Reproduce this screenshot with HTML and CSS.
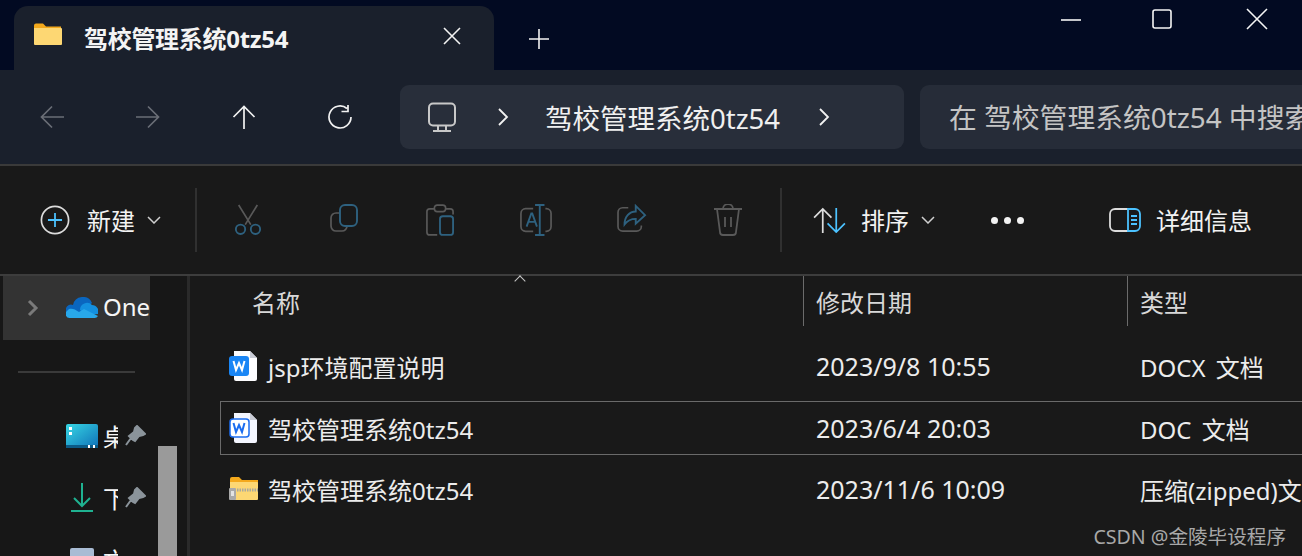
FILE: index.html
```html
<!DOCTYPE html>
<html lang="zh-CN">
<head>
  <meta charset="UTF-8" />
  <title>驾校管理系统0tz54</title>
  <link rel="stylesheet" href="styles.css">
</head>
<body>
  <div class="window">

    <div class="titlebar">
      <div class="tab">
        <svg class="tab-folder" width="30" height="26" viewBox="0 0 30 26">
          <path d="M1 4.500a2 2 0 0 1 2-2h7l3 3h15v3H1z" fill="#f4a91c"/>
          <path d="M1 7h27a1 1 0 0 1 1 1v15a1 1 0 0 1-1 1H2a1 1 0 0 1-1-1z" fill="#fdd773"/>
        </svg>
        <span class="tab-title">驾校管理系统0tz54</span>
        <svg class="tab-close" width="20" height="20" viewBox="0 0 20 20"><path d="M2 2l16 16M18 2L2 18" stroke="#f2f2f2" stroke-width="1.600" fill="none"/></svg>
      </div>
      <svg class="tab-add" width="22" height="22" viewBox="0 0 22 22"><path d="M11 1v20M1 11h20" stroke="#f2f2f2" stroke-width="1.600" fill="none"/></svg>
      <div class="winctl">
        <svg class="win-min" width="22" height="22" viewBox="0 0 22 22"><path d="M1 12h20" stroke="#f5f5f5" stroke-width="1.600"/></svg>
        <svg width="22" height="22" viewBox="0 0 22 22"><rect x="2" y="2" width="18" height="18" rx="2" fill="none" stroke="#f5f5f5" stroke-width="1.600"/></svg>
        <svg width="22" height="22" viewBox="0 0 22 22"><path d="M1 1l20 20M21 1L1 21" stroke="#f5f5f5" stroke-width="1.600" fill="none"/></svg>
      </div>
    </div>

    <div class="navbar">
      <div class="nav-btn">
        <svg width="24" height="24" viewBox="0 0 24 24"><path d="M24 12H1.500M12 1.500L1.500 12 12 22.500" stroke="#6a6e76" stroke-width="1.700" fill="none"/></svg>
      </div>
      <div class="nav-btn">
        <svg width="24" height="24" viewBox="0 0 24 24"><path d="M0 12h22.500M12 1.500L22.500 12 12 22.500" stroke="#6a6e76" stroke-width="1.700" fill="none"/></svg>
      </div>
      <div class="nav-btn">
        <svg width="24" height="24" viewBox="0 0 24 24"><path d="M12 24V1.500M1.500 12L12 1.500 22.500 12" stroke="#f2f2f2" stroke-width="1.700" fill="none"/></svg>
      </div>
      <div class="nav-btn">
        <svg width="26" height="24" viewBox="0 0 26 24"><path d="M20 3.500A11 11 0 1 0 24 12M21 0v6.500h-6.500" stroke="#f2f2f2" stroke-width="1.700" fill="none"/></svg>
      </div>
      <div class="addr">
        <svg class="addr-pc" width="30" height="30" viewBox="0 0 30 30">
          <rect x="2" y="1.500" width="26" height="22" rx="4" fill="none" stroke="#c8c8c8" stroke-width="2"/>
          <path d="M11 24v4M19 24v4M6 29h18" stroke="#c8c8c8" stroke-width="2" fill="none"/>
        </svg>
        <svg class="addr-chev" width="12" height="20" viewBox="0 0 12 20"><path d="M2 2l8 8-8 8" stroke="#f2f2f2" stroke-width="1.800" fill="none"/></svg>
        <span class="addr-text">驾校管理系统0tz54</span>
        <svg class="addr-chev2" width="12" height="20" viewBox="0 0 12 20"><path d="M2 2l8 8-8 8" stroke="#f2f2f2" stroke-width="1.800" fill="none"/></svg>
      </div>
      <div class="search">在 驾校管理系统0tz54 中搜索</div>
    </div>

    <div class="toolbar">
      <div class="tool tool-new">
        <svg width="30" height="30" viewBox="0 0 32 32">
          <circle cx="16" cy="16" r="14.500" fill="none" stroke="#dcdcdc" stroke-width="1.800"/>
          <path d="M16 8.500v15M8.500 16h15" stroke="#4cc2ff" stroke-width="1.900"/>
        </svg>
        <span class="tool-label">新建</span>
        <svg class="caret" width="14" height="8" viewBox="0 0 14 8"><path d="M1 1l6 6 6-6" stroke="#cfcfcf" stroke-width="1.500" fill="none"/></svg>
      </div>
      <div class="tool-sep"></div>

      <div class="tool-icons">
        <div class="icon-btn">
          <svg width="28" height="32" viewBox="0 0 30 34">
            <path d="M5 1l13 21M25 1L12 22" stroke="#595959" stroke-width="1.800" fill="none"/>
            <circle cx="7" cy="27" r="5" fill="none" stroke="#2e617f" stroke-width="2"/>
            <circle cx="23" cy="27" r="5" fill="none" stroke="#2e617f" stroke-width="2"/>
          </svg>
        </div>
        <div class="icon-btn">
          <svg width="28" height="28" viewBox="0 0 28 28">
            <path d="M10 9H6a5 5 0 0 0-5 5v8a5 5 0 0 0 5 5h6a5 5 0 0 0 5-5" stroke="#595959" stroke-width="1.700" fill="none"/>
            <rect x="10" y="1" width="17" height="21" rx="5" fill="none" stroke="#2e617f" stroke-width="1.900"/>
          </svg>
        </div>
        <div class="icon-btn">
          <svg width="28" height="32" viewBox="0 0 30 34">
            <path d="M9 5H4a3 3 0 0 0-3 3v22a3 3 0 0 0 3 3h8M21 5h5a3 3 0 0 1 3 3v3" stroke="#595959" stroke-width="1.800" fill="none"/>
            <rect x="9" y="1" width="12" height="7" rx="3" fill="none" stroke="#595959" stroke-width="1.800"/>
            <rect x="15" y="13" width="14" height="20" rx="3" fill="none" stroke="#2e617f" stroke-width="2"/>
          </svg>
        </div>
        <div class="icon-btn">
          <svg width="32" height="32" viewBox="0 0 34 34">
            <path d="M14 5H6a5 5 0 0 0-5 5v14a5 5 0 0 0 5 5h8M27 5h1a5 5 0 0 1 5 5v14a5 5 0 0 1-5 5h-1" stroke="#595959" stroke-width="1.800" fill="none"/>
            <path d="M21 1v32M16 1h10M16 33h10M7 24l5-14h1l5 14M9 19h7" stroke="#2e617f" stroke-width="2" fill="none"/>
          </svg>
        </div>
        <div class="icon-btn">
          <svg width="30" height="28" viewBox="0 0 32 30">
            <path d="M12 4H6a5 5 0 0 0-5 5v15a5 5 0 0 0 5 5h15a5 5 0 0 0 5-5v-1" stroke="#595959" stroke-width="1.800" fill="none"/>
            <path d="M20 2l10 10-10 9v-5c-6 0-9 2-12 6 0-8 5-14 12-14z" stroke="#2e617f" stroke-width="2" fill="none"/>
          </svg>
        </div>
        <div class="icon-btn">
          <svg width="30" height="32" viewBox="0 0 30 32">
            <path d="M1 5h28M4 5l3 23a3 3 0 0 0 3 3h10a3 3 0 0 0 3-3l3-23M10 5a5 5 0 0 1 10 0M12 13v10M18 13v10" stroke="#595959" stroke-width="1.800" fill="none"/>
          </svg>
        </div>
      </div>

      <div class="tool-sep tool-sep-2"></div>
      <div class="tool tool-sort">
        <svg width="33" height="26" viewBox="0 0 34 27">
          <path d="M10 27V2M1 11l9-9 9 9" stroke="#dcdcdc" stroke-width="1.800" fill="none"/>
          <path d="M24 1v25M15 17l9 9 9-9" stroke="#4cc2ff" stroke-width="1.800" fill="none"/>
        </svg>
        <span class="tool-label">排序</span>
        <svg class="caret" width="14" height="8" viewBox="0 0 14 8"><path d="M1 1l6 6 6-6" stroke="#cfcfcf" stroke-width="1.500" fill="none"/></svg>
      </div>
      <div class="dots"><i></i><i></i><i></i></div>
      <div class="tool tool-details">
        <svg width="32" height="24" viewBox="0 0 32 24">
          <path d="M20 1H6a5 5 0 0 0-5 5v12a5 5 0 0 0 5 5h14" stroke="#dcdcdc" stroke-width="1.800" fill="none"/>
          <path d="M19 1h7a5 5 0 0 1 5 5v12a5 5 0 0 1-5 5h-7zM22 8h6M22 12h6M22 16h6" stroke="#4cc2ff" stroke-width="1.800" fill="none"/>
        </svg>
        <span class="tool-label">详细信息</span>
      </div>
    </div>

    <div class="main">
      <div class="sidebar">
        <div class="side-one">
          <svg class="side-chev" width="12" height="18" viewBox="0 0 12 18"><path d="M2 2l7 7-7 7" stroke="#7a7a7a" stroke-width="3" fill="none"/></svg>
          <svg class="side-cloud" width="32" height="22" viewBox="0 0 32 22">
            <path d="M7 8a10 10 0 0 1 19-2l-8 7-6 5H3a5 5 0 0 1 4-10z" fill="#0a66bf"/>
            <path d="M14 13a7 7 0 0 1 12-5 6.500 6.500 0 0 1 6 9l-12 1z" fill="#1490df"/>
            <path d="M4 21a4 4 0 0 1-3-7l2-2c3-1 6 0 10 3l5-3 14 7a4 4 0 0 1-4 2z" fill="#28a8ea"/>
          </svg>
          <span class="side-name side-name-one">OneDrive</span>
        </div>
        <div class="side-sep"></div>
        <div class="side-item side-item-first">
          <svg class="side-icon" width="32" height="24" viewBox="0 0 32 24">
            <defs><linearGradient id="desk" x1="0" y1="0" x2="1" y2="1"><stop offset="0" stop-color="#37d7e4"/><stop offset="1" stop-color="#0f70b7"/></linearGradient></defs>
            <rect width="32" height="24" rx="2" fill="url(#desk)"/>
            <rect y="21" width="32" height="3" fill="#0b5a86"/>
            <path d="M3 3h3v3H3zM3 8h3v3H3zM22 21h2v3h-2zM27 21h2v3h-2z" fill="#fff"/>
          </svg>
          <span class="side-name side-short">桌面</span>
          <svg class="side-pin" width="22" height="22" viewBox="0 0 22 22"><path d="M13 1l8 8-2 1-4 1-4 5-2-1-2-2-2-2 5-4 1-4zM7 13l-5 7" fill="#8b949b" stroke="#8b949b" stroke-width="2"/></svg>
        </div>
        <div class="side-item">
          <svg class="side-icon" width="32" height="30" viewBox="0 0 32 30"><path d="M16 0v23M8 15l8 8 8-8M5 28h22" stroke="#1fb291" stroke-width="2" fill="none"/></svg>
          <span class="side-name side-short">下载</span>
          <svg class="side-pin" width="22" height="22" viewBox="0 0 22 22"><path d="M13 1l8 8-2 1-4 1-4 5-2-1-2-2-2-2 5-4 1-4zM7 13l-5 7" fill="#8b949b" stroke="#8b949b" stroke-width="2"/></svg>
        </div>
        <div class="side-item">
          <svg class="side-icon" width="32" height="24" viewBox="0 0 32 24"><rect x="4" width="24" height="24" rx="2" fill="#a9bcd4"/></svg>
          <span class="side-name side-short">文档</span>
        </div>
      </div>
      <div class="scroll-track"><div class="scroll-thumb"></div></div>
      <div class="divider"></div>

      <div class="files">
        <div class="sort-mark"></div>
        <div class="file-head">
          <div class="col-name">名称</div>
          <div class="col-date">修改日期</div>
          <div class="col-type">类型</div>
        </div>

        <div class="file-row">
          <div class="cell-name">
            <svg class="file-icon" width="30" height="32" viewBox="0 0 30 32">
              <path d="M5 1h16l7 7v21a2 2 0 0 1-2 2H7a2 2 0 0 1-2-2z" fill="#fdfdff"/>
              <path d="M21 1l7 7h-7z" fill="#c9ccd6"/>
              <rect y="6" width="20" height="20" rx="3" fill="#1a86f5"/>
              <path d="M4.500 11l2.500 9 3-7 3 7 2.500-9" stroke="#fff" stroke-width="2" fill="none"/>
            </svg>
            <span>jsp环境配置说明</span>
          </div>
          <div class="cell-date">2023/9/8 10:55</div>
          <div class="cell-type">DOCX 文档</div>
        </div>

        <div class="file-row file-row-sel">
          <div class="cell-name">
            <svg class="file-icon" width="30" height="32" viewBox="0 0 30 32">
              <path d="M5 1h16l7 7v21a2 2 0 0 1-2 2H7a2 2 0 0 1-2-2z" fill="#f4f6ff"/>
              <path d="M21 1l7 7h-7z" fill="#c9ccd6"/>
              <rect x="1" y="7" width="19" height="18" rx="3" fill="#fff" stroke="#1a6cf0" stroke-width="1.500"/>
              <path d="M4.500 11l2.500 9 3-7 3 7 2.500-9" stroke="#1a6cf0" stroke-width="2" fill="none"/>
            </svg>
            <span>驾校管理系统0tz54</span>
          </div>
          <div class="cell-date">2023/6/4 20:03</div>
          <div class="cell-type">DOC 文档</div>
        </div>

        <div class="file-row">
          <div class="cell-name">
            <svg class="file-icon" width="30" height="24" viewBox="0 0 30 24">
              <path d="M1 2a2 2 0 0 1 2-2h7l3 3h16v4H1z" fill="#f4a91c"/>
              <path d="M1 5h27a1 1 0 0 1 1 1v16a1 1 0 0 1-1 1H2a1 1 0 0 1-1-1z" fill="#fdd773"/>
              <path d="M8 13h21" stroke="#a8a8a0" stroke-width="3" stroke-dasharray="1.500 1"/>
              <rect y="11" width="7" height="12" rx="1" fill="#a9a9a9"/>
              <rect x="2" y="14" width="3" height="5" fill="#e3e3e3"/>
            </svg>
            <span>驾校管理系统0tz54</span>
          </div>
          <div class="cell-date">2023/11/6 10:09</div>
          <div class="cell-type">压缩(zipped)文件夹</div>
        </div>
      </div>
      <div class="watermark">CSDN @金陵毕设程序</div>
    </div>

  </div>
</body>
</html>
```

FILE: styles.css
```css
html, body {
  height: 100%;
  margin: 0;
  overflow: hidden;
  background: #191919;
}

body {
  font-family: "Noto Sans", "Noto Sans CJK SC", sans-serif;
  font-size: 24px;
  color: #e8e8e8;
}

svg {
  display: block;
  flex: none;
}

.window {
  width: 1302px;
  height: 556px;
  display: flex;
  flex-direction: column;
  overflow: hidden;
}

/* title bar */
.titlebar {
  height: 70px;
  flex: none;
  background: #020a22;
  display: flex;
  align-items: flex-end;
  padding-left: 14px;
}

.tab {
  width: 480px;
  height: 64px;
  box-sizing: border-box;
  background: #1a202c;
  border-radius: 14px 14px 0 0;
  display: flex;
  align-items: center;
  padding: 0 32px 0 19px;
}

.tab-folder {
  margin: -8px 21px 0 0;
}

.tab-title {
  flex: 1;
  font-weight: 700;
  letter-spacing: -0.3px;
  color: #f4f4f4;
  margin-top: -2px;
  white-space: nowrap;
}

.tab-close {
  margin-top: -4px;
}

.tab-add {
  margin: 0 0 20px 34px;
}

.winctl {
  margin-left: auto;
  align-self: flex-start;
  display: flex;
  gap: 73px;
  padding: 8px 34px 0 0;
}

.win-min {
  margin-right: -4px;
}

/* address row */
.navbar {
  height: 94px;
  flex: none;
  box-sizing: border-box;
  background: #1a202c;
  display: flex;
  align-items: center;
  padding-left: 4px;
  overflow: hidden;
}

.nav-btn {
  width: 96px;
  flex: none;
  display: flex;
  justify-content: center;
}

.addr {
  width: 504px;
  height: 64px;
  flex: none;
  box-sizing: border-box;
  background: #282e3a;
  border-radius: 9px;
  display: flex;
  align-items: center;
  padding-left: 27px;
  margin: -1px 0 0 12px;
}

.addr-chev {
  margin-left: 40px;
}

.addr-text {
  font-size: 27.5px;
  color: #f0f0f0;
  margin-left: 36px;
  white-space: nowrap;
}

.addr-chev2 {
  margin-left: 38px;
}

.search {
  width: 500px;
  height: 64px;
  flex: none;
  box-sizing: border-box;
  margin: -1px 0 0 16px;
  padding-left: 29px;
  background: #262c38;
  border-radius: 9px 0 0 9px;
  font-size: 27.8px;
  line-height: 64px;
  color: #c4c4c4;
  white-space: nowrap;
}

/* command bar */
.toolbar {
  height: 112px;
  flex: none;
  box-sizing: border-box;
  background: #191919;
  border-top: 2px solid #3a3a3a;
  border-bottom: 2px solid #3d3d3d;
  display: flex;
  align-items: center;
}

.tool {
  display: flex;
  align-items: center;
}

.tool-label {
  white-space: nowrap;
  color: #f2f2f2;
  margin-top: -2px;
}

.tool-new {
  padding-left: 40px;
  width: 195px;
  box-sizing: border-box;
  flex: none;
}

.tool-new .tool-label {
  margin-left: 17px;
}

.caret {
  margin-left: 12px;
}

.tool-sep {
  width: 2px;
  height: 64px;
  flex: none;
  background: #303030;
}

.tool-icons {
  display: flex;
  flex: none;
  padding-left: 3px;
}

.icon-btn {
  width: 96px;
  flex: none;
  display: flex;
  justify-content: center;
}

.tool-sep-2 {
  margin-left: 4px;
}

.tool-sort {
  margin-left: 31px;
  flex: none;
}

.tool-sort .tool-label {
  margin-left: 15px;
}

.dots {
  display: flex;
  flex: none;
  gap: 6px;
  margin-left: 56px;
}

.dots i {
  width: 7px;
  height: 7px;
  border-radius: 50%;
  background: #f2f2f2;
}

.tool-details {
  margin-left: 85px;
  flex: none;
}

.tool-details .tool-label {
  margin-left: 15px;
}

/* lower pane */
.main {
  flex: 1;
  display: flex;
  background: #191919;
  position: relative;
  min-height: 0;
}

.sidebar {
  width: 150px;
  flex: none;
  overflow: hidden;
  background: #171717;
}

.side-one {
  height: 64px;
  margin-left: 3px;
  background: #333333;
  display: flex;
  align-items: center;
}

.side-chev {
  margin-left: 24px;
}

.side-cloud {
  margin-left: 27px;
}

.side-name {
  color: #f6f6f6;
  margin-left: 6px;
  white-space: nowrap;
}

.side-name-one {
  margin: -3px 0 0 5px;
}

.side-sep {
  height: 2px;
  margin: 31px 15px 0 18px;
  background: #3a3a3a;
}

.side-item {
  height: 62px;
  display: flex;
  align-items: center;
  padding-left: 66px;
}

.side-item-first {
  margin-top: 32px;
}

.side-short {
  width: 15px;
  overflow: hidden;
  margin: -2px 0 0 5px;
}

.side-pin {
  margin-left: 6px;
}

.scroll-track {
  width: 37px;
  flex: none;
  background: #171717;
  display: flex;
  flex-direction: column;
  justify-content: flex-end;
  padding-left: 8px;
  box-sizing: border-box;
}

.scroll-thumb {
  width: 19px;
  height: 110px;
  background: #9a9a9a;
}

.divider {
  width: 3px;
  flex: none;
  background: #2a2a2a;
}

.files {
  flex: 1;
  min-width: 0;
  position: relative;
}

.sort-mark {
  position: absolute;
  left: 326px;
  top: 1px;
  width: 7px;
  height: 7px;
  border-left: 1.5px solid #c8c8c8;
  border-top: 1.5px solid #c8c8c8;
  transform: rotate(45deg);
}

.file-head {
  height: 50px;
  display: flex;
  align-items: flex-start;
  color: #d8d8d8;
}

.col-name {
  width: 613px;
  flex: none;
  box-sizing: border-box;
  padding: 8px 0 0 62px;
  height: 50px;
}

.col-date,
.col-type {
  box-sizing: border-box;
  height: 50px;
  padding: 8px 0 0 12px;
  border-left: 1px solid #6b6b6b;
}

.col-date {
  width: 324px;
  flex: none;
}

.col-type {
  flex: 1;
}

.file-row {
  height: 54px;
  margin: 13px -10px 0 30px;
  display: flex;
  align-items: center;
  color: #ececec;
  box-sizing: border-box;
  white-space: nowrap;
}

.file-row + .file-row {
  margin-top: 7px;
}

.file-row-sel,
.file-row + .file-row-sel {
  margin-top: 8px;
  outline: 1px solid #6a6a6a;
  outline-offset: -1px;
}

.cell-name {
  width: 583px;
  flex: none;
  display: flex;
  align-items: center;
  padding-left: 9px;
  box-sizing: border-box;
}

.file-icon {
  margin-right: 9px;
}

.cell-date {
  width: 324px;
  flex: none;
  padding-left: 13px;
  box-sizing: border-box;
  font-size: 25px;
}

.cell-type {
  padding-left: 13px;
  word-spacing: 4px;
}

.watermark {
  position: absolute;
  right: 16px;
  bottom: 6px;
  font-size: 19.6px;
  color: #a8a8a8;
  white-space: nowrap;
}
```
